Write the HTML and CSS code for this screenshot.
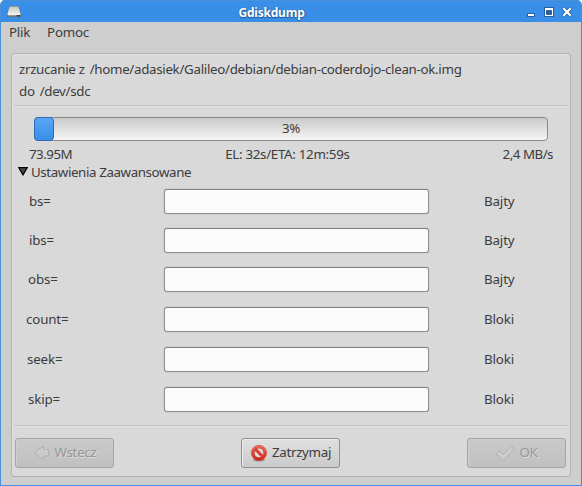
FILE: index.html
```html
<!DOCTYPE html>
<html lang="pl">
<head>
<meta charset="utf-8">
<title>Gdiskdump</title>
<link rel="stylesheet" href="styles.css">
</head>
<body>
<div class="window">
  <header class="titlebar">
    <svg class="disk" width="16" height="14" viewBox="0 0 16 14">
      <defs><linearGradient id="dk" x1="0" y1="0" x2="0" y2="1"><stop offset="0" stop-color="#c6c6c0"/><stop offset="1" stop-color="#f4f4f0"/></linearGradient></defs>
      <path d="M1 9.5 3.4 1.5Q3.6 1 4.2 1h7.6q.6 0 .8.5L15 9.5v1.8q0 .8-.8.8H1.8q-.8 0-.8-.8z" fill="#6b6d69"/>
      <path d="M1.4 9 3.7 1.4h8.6L14.6 9q0 1-.9 1H2.3q-.9 0-.9-1z" fill="url(#dk)"/>
      <path d="M2 10.7h8" stroke="#a5a5a0"/><path d="M11 10.8h3" stroke="#333"/>
    </svg>
    <h1>Gdiskdump</h1>
    <svg class="controls" width="46" height="13" viewBox="0 0 46 13">
      <path d="M1 7h8v4H1z" fill="#28619f"/><path d="M2 8h6v2H2z" fill="#fff"/>
      <path d="M18 1h10v10H18z" fill="#28619f"/><path d="M19 2h8v8h-8zM21 4v4h4V4z" fill="#fff" fill-rule="evenodd"/><path d="M20.5 4.5h5v4h-5z" fill="none" stroke="#28619f"/>
      <path d="m37 2 8 8m0-8-8 8" stroke="#28619f" stroke-width="3.8"/><path d="m37.3 2.3 7.4 7.4m0-7.4-7.4 7.4" stroke="#fff" stroke-width="2.2"/>
    </svg>
  </header>
  <nav class="menu"><span class="plik">Plik</span><span class="pomoc">Pomoc</span></nav>
  <main class="panel">
    <div class="paths">
      <p><span class="from">zrzucanie z</span><span class="file">/home/adasiek/Galileo/debian/debian-coderdojo-clean-ok.img</span></p>
      <p><span class="to">do</span><span class="dev">/dev/sdc</span></p>
    </div>
    <hr>
    <div class="progress"><div class="fill"></div><span>3%</span></div>
    <div class="stats"><span class="size">73.95M</span><span class="eta">EL: 32s/ETA: 12m:59s</span><span class="rate">2,4 MB/s</span></div>
    <div class="expander">
      <svg width="10" height="9" viewBox="0 0 10 9"><path d="M.8.6h8.4L5 7.9z" fill="#4b4b4b" stroke="#000" stroke-width="1.2"/></svg>
      <span>Ustawienia Zaawansowane</span>
    </div>
    <div class="fields">
      <label class="row"><span class="bs">bs=</span><input type="text"><span>Bajty</span></label>
      <label class="row"><span class="ibs">ibs=</span><input type="text"><span>Bajty</span></label>
      <label class="row"><span class="obs">obs=</span><input type="text"><span>Bajty</span></label>
      <label class="row"><span class="count">count=</span><input type="text"><span>Bloki</span></label>
      <label class="row"><span class="seek">seek=</span><input type="text"><span>Bloki</span></label>
      <label class="row"><span class="skip">skip=</span><input type="text"><span>Bloki</span></label>
    </div>
    <hr>
    <div class="actions">
      <button class="back" disabled>
        <svg width="18" height="16" viewBox="0 0 18 16"><path d="M1.5 7.8 10.5 1v3.7h5.3v6.4h-5.3v3.7z" fill="#cacaca" stroke="#b0b0b0"/><path d="M3.5 7.8 9.5 3.3v2.4h5.3" fill="none" stroke="#d4d4d4"/></svg>
        <span>Wstecz</span>
      </button>
      <button class="stop">
        <svg width="18" height="18" viewBox="0 0 18 18">
          <defs><linearGradient id="rd" x1="0" y1="0" x2="0" y2="1"><stop offset="0" stop-color="#f2705f"/><stop offset="1" stop-color="#d51f13"/></linearGradient></defs>
          <ellipse cx="9" cy="16" rx="6" ry="1.6" fill="#999"/>
          <circle cx="9" cy="8.9" r="7.6" fill="url(#rd)" stroke="#c63a30" stroke-width=".6"/>
          <circle cx="9" cy="8.9" r="4.9" fill="#dedede" stroke="#a82b20" stroke-width=".7"/>
          <path d="m5 4.9 8 8" stroke="#e03d2e" stroke-width="3"/>
        </svg>
        <span>Zatrzymaj</span>
      </button>
      <button class="ok" disabled>
        <svg width="20" height="17" viewBox="0 0 20 17"><path d="M1 9.2 4.2 6l4 3.7L16.5 1l2.8 2.7L8.3 15.7z" fill="#cbcbcb" stroke="#b0b0b0"/><path d="m2.5 9.2 1.8-1.8 4 3.8 8.2-8.7" fill="none" stroke="#d4d4d4"/></svg>
        <span>OK</span>
      </button>
    </div>
  </main>
</div>
</body>
</html>
```
FILE: styles.css
```css
* { box-sizing: border-box; }
body {
  margin: 0;
  background: #fff;
  color: #3c3c3c;
  font: 13.33px/18px "Noto Sans", "Open Sans", sans-serif;
}
p, h1 { margin: 0; }
span { white-space: nowrap; }
.window {
  height: 486px;
  border: 1px solid #4a90d9;
  border-top-width: 0;
  border-radius: 5px 5px 0 0;
  background: #cecece;
  overflow: hidden;
}
.titlebar {
  display: grid;
  grid-template-columns: 60px 1fr 60px;
  align-items: center;
  height: 22px;
  margin: 0 -1px;
  background: #398ee7;
  border-top: 1px solid #4a90d9;
}
.disk { margin: 0 0 0 6px; }
.titlebar h1 {
  padding: 3px 0 0 6px;
  margin-left: -51px;
  margin-right: -6px;
  color: #fff;
  text-align: center;
  font: bold 12px/18px "Noto Sans", sans-serif;
  letter-spacing: -.2px;
  text-shadow: 0 1px 1px #1e528b, 1px 0 1px #28619f;
}
.controls { justify-self: end; margin: 2px 10px 0 0; }
.menu { display: flex; gap: 17px; height: 31px; padding: 1px 8px; letter-spacing: -.25px; }
.panel {
  width: 560px;
  height: 424px;
  margin-left: 10px;
  border: 1px solid #b2b2b2;
  border-radius: 3px;
  background: #d9d9d9;
  box-shadow: inset 1px 1px #e2e2e2;
}
.paths { height: 51px; padding: 6px 7px 0; letter-spacing: -.31px; }
.paths p { display: flex; gap: 5px; height: 22px; }
hr { height: 2px; margin: 0 2px; border: 0; border-top: 1px solid #c0c0c0; background: #e3e3e3; }
.progress {
  display: grid;
  height: 24px;
  margin: 10px 22px 0;
  border: 1px solid #8a8a8a;
  border-radius: 4px;
  background: linear-gradient(#cacaca, #f5f5f5);
}
.progress > * { grid-area: 1 / 1; }
.progress span { place-self: center; margin-bottom: 2px; letter-spacing: -.4px; }
.fill {
  width: 20px;
  margin: -1px;
  border: 1px solid #2b6cb4;
  border-radius: 4px;
  background: linear-gradient(#5ba5f6, #398ee7);
}
.stats { display: flex; justify-content: space-between; padding: 4px 17px 0; height: 22px; letter-spacing: -.5px; }
.eta { letter-spacing: -.3px; }
.expander { display: flex; gap: 3px; height: 20px; padding: 0 6px; letter-spacing: -.39px; }
.expander svg { margin-top: 4px; }
.fields { display: grid; grid-template-rows: 39px 39px repeat(4, 40px); height: 242px; padding-top: 5px; }
.row { display: grid; grid-template-columns: 152px 265px 1fr; height: 26px; align-items: center; letter-spacing: -.15px; }
.row span { padding-left: 17px; }
.row span:last-child { padding-left: 55px; }
.row .obs, .row .skip { padding-left: 16px; }
.row .seek { padding-left: 15px; }
.row .count { padding-left: 14px; }
input {
  width: 265px;
  height: 25px;
  margin: 0;
  border: 1px solid #8e8e8e;
  border-top-color: #808080;
  border-radius: 3px;
  background: #fcfcfc;
  box-shadow: 0 0 0 1px #d0d0d0;
}
.actions { display: flex; justify-content: space-between; padding: 11px 4px 0 3px; }
button {
  display: flex;
  align-items: center;
  justify-content: center;
  gap: 4px;
  width: 99px;
  height: 30px;
  padding: 0;
  border: 1px solid #8f8f8f;
  border-radius: 3px;
  background: linear-gradient(#e0e0e0, #cacaca);
  box-shadow: inset 1px 1px #ededed;
  color: #3c3c3c;
  font: inherit;
  letter-spacing: -.3px;
}
button span { margin-top: -2px; }
button:disabled {
  border-color: #a5a5a5;
  background: linear-gradient(#cacaca, #c0c0c0);
  box-shadow: inset 1px 1px #cecece;
  color: #969696;
  text-shadow: 1px 1px #dcdcdc;
}
```
